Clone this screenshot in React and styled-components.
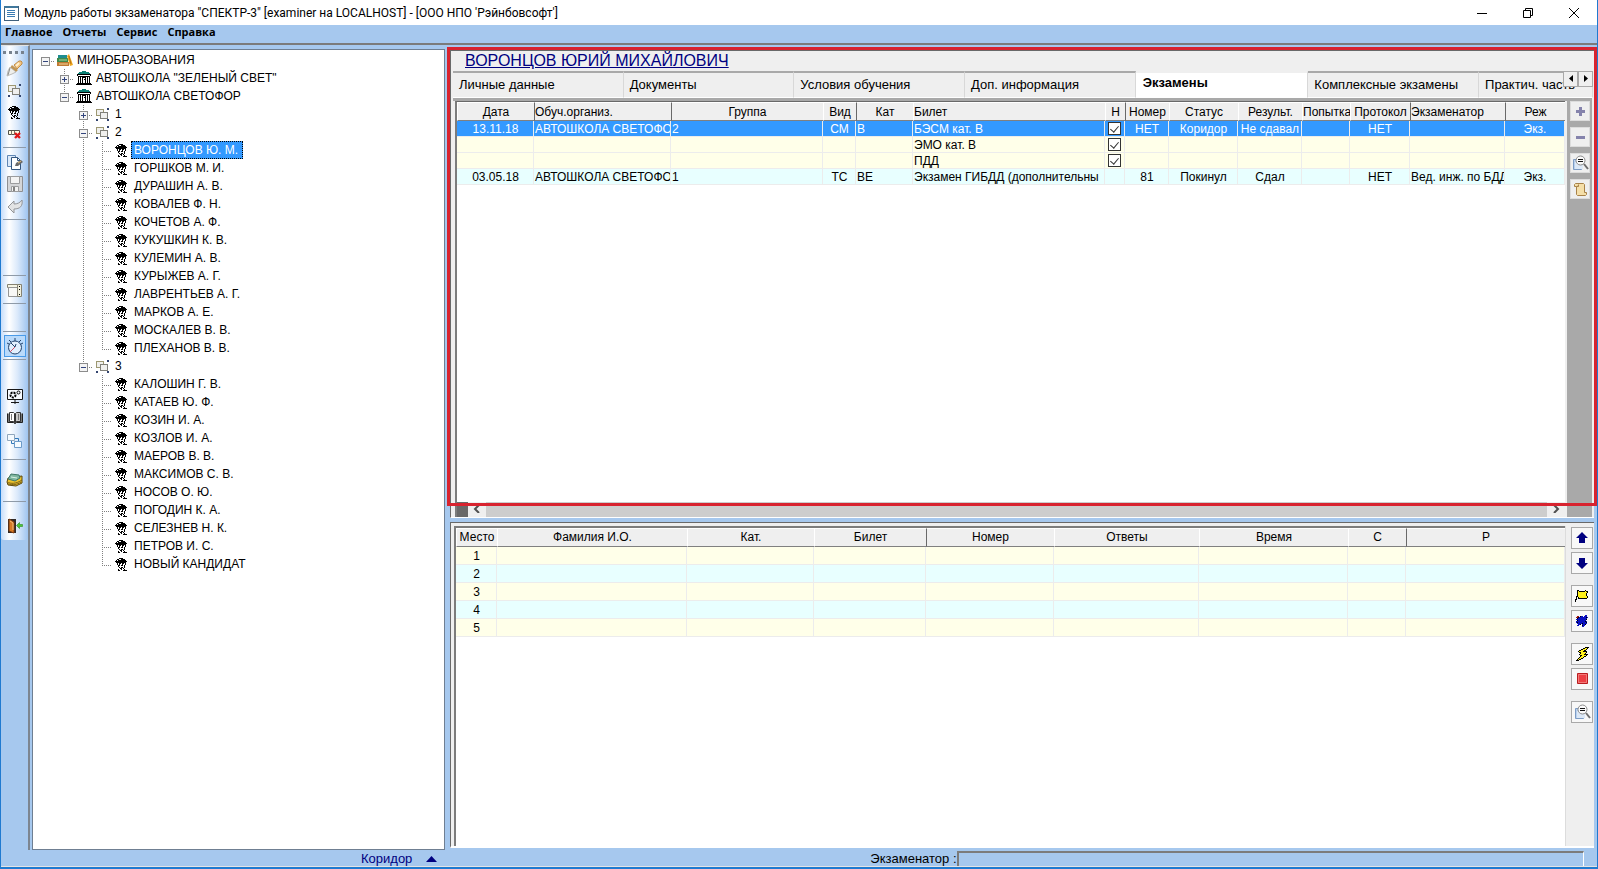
import React, { useState } from "react";
import styled, { createGlobalStyle, css } from "styled-components";

const PERSON = [
  "....####.....",
  "..##..####...",
  ".#.########..",
  "############.",
  ".##########..",
  "..#.##.##.#..",
  "..#.#..#..#..",
  "...##.##.#...",
  "...#.....#...",
  "....#.##.#...",
  ".....##.#....",
  "...#..#..#...",
  "...##...####.",
];

const BUILDING = [
  "......tttt......",
  "...tttttttttt...",
  "..tttttttttttt..",
  ".##############.",
  ".#wwwwwwwwwwww#.",
  "..############..",
  "..#w#w####w#w#..",
  "..#w#w#ww#w#w#..",
  "..#w#w#w##w#w#..",
  "..#w#w#ww#w#w#..",
  "..#w#w#ww#w#w#..",
  "..#w#w#ww#w#w#..",
  ".##############.",
  "################",
];

const GROUP = [
  "...........bb",
  "yyyyyyyy...bb",
  "yggggggy.....",
  "yggggggy.....",
  "yggg########.",
  "yggg#gggggg#.",
  "yggg#gggggg#.",
  "yyyy#gggggg#.",
  "....#gggggg#.",
  "....#gggggg#.",
  "....########.",
  "bb.........bb",
  "bb.........bb",
];

const FLAG = [
  "..##......#...",
  "..#y######y##.",
  "..#yyyyyyyyy#.",
  "..#yyyyyyyy#..",
  "..#yyyyyyyy#..",
  "..#yyyyyyyy#..",
  ".##yyyyyyyyy#.",
  ".#.#yyyyyyyy#.",
  ".#.#########..",
  "##............",
  "#.............",
  "#.............",
];

const SPLAT = [
  ".........bb.",
  ".rr.#bb.bbb.",
  "rr#bbbbbbb#b",
  ".#bbbbbbbbb.",
  "bbbbbbbbbb#.",
  ".#bbbbbbbb..",
  "bbbbbbbbb#b.",
  "b#bbbbbbbb#.",
  ".bbbbb#bbbb.",
  "..bb#.bbb#..",
  ".bb...#bb...",
  "......bb....",
];

const BOLT = [
  "..........####",
  "........##yy#.",
  "......##yyy#..",
  "....##yyy##...",
  "...#yyyy####..",
  "....##yyyyy#..",
  ".....#yyyy#...",
  "....#yyyy####.",
  ".....##yyyy#..",
  ".....#yyy##...",
  "....#yyy#.....",
  "...#yy##......",
  "..#y##........",
  ".###..........",
];

const inks = {
  "#": "#000000",
  t: "#0c8075",
  w: "#ffffff",
  y: "#fff01a",
  b: "#0a10c0",
  r: "#a01818",
};
const groupInks = { "#": "#80807a", y: "#9d9872", g: "#f0f0ee", b: "#33456f" };

function Pixels({ rows, colors = inks }) {
  const width = rows[0].length;
  return (
    <svg width={width} height={rows.length} shapeRendering="crispEdges" aria-hidden="true">
      {rows.map((row, y) =>
        row.split("").map((ch, x) =>
          ch === "." ? null : <rect key={x + "-" + y} x={x} y={y} width="1" height="1" fill={colors[ch]} />
        )
      )}
    </svg>
  );
}

const PersonIcon = () => <Pixels rows={PERSON} />;
const BuildingIcon = () => <Pixels rows={BUILDING} />;
const GroupIcon = () => <Pixels rows={GROUP} colors={groupInks} />;

const BooksIcon = () => (
  <svg width="16" height="13" viewBox="0 0 16 13">
    <path d="M1 1h9v3H1z" fill="#1f8d90" />
    <path d="M0 4h11v4H0z" fill="#3f8a4c" />
    <path d="M2 6h8" stroke="#a8d6a0" />
    <path d="M0 8h12v4H0z" fill="#c07a34" />
    <path d="M2 10h9" stroke="#f4d79a" />
    <path d="M10 2l2-2 4 11-3 1z" fill="#f0a820" />
    <path d="M12 2l2 8" stroke="#b87414" />
  </svg>
);

const WindowIcon = () => (
  <svg width="16" height="16" viewBox="0 0 16 16" shapeRendering="crispEdges">
    <path d="M1 1h14v14H1z" fill="#fff" stroke="#40607c" />
    <path d="M1 1h14v2H1z" fill="#40789c" />
    <path d="M4 5.500h8M4 7.500h8M4 9.500h8M4 11.500h8" stroke="#3a7cb4" />
  </svg>
);

const FlashlightIcon = () => (
  <svg width="17" height="17" viewBox="0 0 17 17">
    <path d="M8 5l5-4h2l1 1v2l-5 5z" fill="#f3c583" stroke="#c08c48" />
    <path d="M6 5l6 5-2 2-6-4z" fill="#c19552" />
    <path d="M4 7l6 5-4 2-5 2 1-5z" fill="#efefec" stroke="#a5a49e" strokeWidth="0.7" />
    <path d="M4 8l-2 7" stroke="#8d8d8a" />
    <path d="M10 6l3-3" stroke="#fff1cf" strokeWidth="2" />
  </svg>
);

const RemoveIcon = () => (
  <svg width="15" height="12" viewBox="0 0 15 12">
    <path d="M1.500 2.500h11v4h-11z" fill="#fffbe2" stroke="#53524a" />
    <path d="M4.500 3v4M7.500 3v4" stroke="#77756a" />
    <path d="M8 5l5 5M13 5l-5 5" stroke="#e01818" strokeWidth="2.4" />
  </svg>
);

const EditDocsIcon = () => (
  <svg width="18" height="17" viewBox="0 0 18 17">
    <path d="M1.500 1.500h8v11h-8z" fill="#dceafa" stroke="#5f86b5" />
    <path d="M5.500 3.500h6l3 3v9h-9z" fill="#fff" stroke="#35577f" />
    <path d="M11.500 3.500v3h3" fill="none" stroke="#35577f" />
    <path d="M9 12l1-3 5-3 2 2-5 4z" fill="#6a6a6a" />
    <path d="M12 9l3-2" stroke="#e4bb70" />
  </svg>
);

const SaveIcon = () => (
  <svg width="16" height="16" viewBox="0 0 16 16">
    <path d="M.5.5h15v15H.5z" fill="#d4d5d7" stroke="#8e8f92" />
    <path d="M3.500.5h9v7h-9z" fill="#f3f3f3" stroke="#9b9c9e" />
    <path d="M4.500 10.500h7v5h-7z" fill="#f3f3f3" stroke="#9b9c9e" />
    <path d="M7 11v4" stroke="#808080" strokeWidth="2" />
  </svg>
);

const UndoIcon = () => (
  <svg width="16" height="14" viewBox="0 0 16 14">
    <path d="M1 8l6-6v3c3 0 6-1 8-4 1 6-2 9-8 9v4z" fill="#e2e3e4" stroke="#929498" />
  </svg>
);

const CabinetIcon = () => (
  <svg width="15" height="15" viewBox="0 0 15 15">
    <path d="M.5 1.500h10v3H.5z" fill="#f6f5e6" stroke="#858272" />
    <path d="M1.500 4.500h9v9h-9z" fill="#f8f8f6" stroke="#959595" />
    <path d="M10.500 1.500h4v12h-4z" fill="#f1efdc" stroke="#858272" />
    <path d="M12.500 3v1M12.500 6v1M12.500 11v1" stroke="#000" />
  </svg>
);

const ClockIcon = () => (
  <svg width="18" height="17" viewBox="0 0 18 17">
    <circle cx="9" cy="9.500" r="6.500" fill="#e2f0fe" stroke="#24436b" />
    <path d="M9 0v3M3 2l2 2M15 2l-2 2M1 5l2 1M17 5l-2 1" stroke="#24436b" />
    <path d="M5 5l4 4 1-3" stroke="#24436b" fill="none" />
    <path d="M9 9l-5 5" stroke="#d2516b" />
  </svg>
);

const MonitorIcon = () => (
  <svg width="16" height="16" viewBox="0 0 16 16">
    <path d="M.5 1.500h15v10H.5z" fill="#f8fbff" stroke="#161616" />
    <circle cx="6" cy="7" r="2.500" fill="none" stroke="#000" strokeWidth="2" strokeDasharray="2 1" />
    <circle cx="11.500" cy="4.500" r="1.500" fill="none" stroke="#000" />
    <path d="M8 11v5M4 14.500h8" stroke="#161616" />
  </svg>
);

const BookIcon = () => (
  <svg width="16" height="14" viewBox="0 0 16 14">
    <path d="M.5 2.500v9h6l1 1h1l1-1h6v-9" fill="#777" stroke="#222" />
    <path d="M2.500 1.500h4l1 1v9l-1-1h-4z" fill="#fff" stroke="#333" />
    <path d="M13.500 1.500h-4l-1 1v9l1-1h4z" fill="#c8c8c8" stroke="#333" />
    <path d="M4.500 3v6M11.500 3v6" stroke="#777" />
  </svg>
);

const LinkIcon = () => (
  <svg width="15" height="15" viewBox="0 0 15 15">
    <path d="M.5 1.500h7v6h-7z" fill="#f4faff" stroke="#8fa6bd" />
    <path d="M7.500 8.500h7v6h-7z" fill="#f4faff" stroke="#6c9bc8" />
    <path d="M8 5.500h3.500V8M4.500 8v2.500H7" stroke="#2f78ba" fill="none" />
  </svg>
);

const MoneyIcon = () => (
  <svg width="17" height="14" viewBox="0 0 17 14">
    <path d="M1 9l1-4 14-2v7l-6 3-8-1z" fill="#eec32c" stroke="#5b480e" />
    <path d="M2 6l3-5 8 1 1 3-5 3z" fill="#7fb6a0" stroke="#3f7767" />
    <path d="M5 4l6 1" stroke="#d8f1e5" />
    <path d="M1 9c4 2 9 2 15-2M2 11c5 1 9 1 13-2" stroke="#7a6216" fill="none" />
  </svg>
);

const ExitIcon = () => (
  <svg width="16" height="16" viewBox="0 0 16 16">
    <path d="M1 1h8v14H1z" fill="#302a28" />
    <path d="M2 1l5 3v11l-5-2z" fill="#d77a25" stroke="#7a3a10" />
    <path d="M3 3l3 2v7" stroke="#f4bd7c" fill="none" />
    <path d="M9.500 7.500l3-3v2h3v2h-3v2z" fill="#4ec637" stroke="#2c8c20" strokeWidth="0.6" />
  </svg>
);

const PreviewIcon = () => (
  <svg width="17" height="16" viewBox="0 0 17 16">
    <path d="M1.500 4.500h8v10h-8z" fill="#b9d1ef" stroke="#7d9cc4" />
    <path d="M3 7h8v7H3z" fill="#dce8f6" />
    <circle cx="8.500" cy="5.500" r="4.500" fill="#fafafa" stroke="#8a8a8a" />
    <path d="M6 4.500h5M6 6.500h5" stroke="#111" />
    <path d="M12 9l4 5" stroke="#6e6e6e" strokeWidth="2" />
  </svg>
);

const ScrollIcon = () => (
  <svg width="15" height="15" viewBox="0 0 15 15">
    <path d="M1.500 2.500l1-1h8l1 1v8h2v2l-1 1h-8l-1-1v-8h-2z" fill="#f5dfa9" stroke="#a88248" />
    <path d="M3.500 4.500h2v-2" fill="#d6b372" stroke="#a88248" />
  </svg>
);

const SignIcon = ({ plus }) => (
  <svg width="12" height="12" viewBox="0 0 12 12" shapeRendering="crispEdges">
    <path d={plus ? "M2 5h9v3H2zM5 2h3v9H5z" : "M2 5h9v3H2z"} fill="#8583ac" />
  </svg>
);

const BigArrow = ({ down }) => (
  <svg width="12" height="12" viewBox="0 0 12 12">
    <path d={down ? "M3 1h6v5h3l-6 6-6-6h3z" : "M3 11h6V6h3L6 0 0 6h3z"} fill="#000080" />
  </svg>
);

const StopIcon = () => (
  <svg width="13" height="13" viewBox="0 0 13 13">
    <path d="M1.500 1.500h10v10h-10z" fill="#f05450" stroke="#b81d20" />
    <path d="M2.500 2.500h8v8h-8z" fill="#ec4044" stroke="#f47a78" />
  </svg>
);

const toolbarItems = [
  { icon: <FlashlightIcon />, label: "Поиск" },
  { icon: <GroupIcon />, label: "Группа" },
  { icon: <PersonIcon />, label: "Кандидат" },
  { icon: <RemoveIcon />, label: "Удалить" },
  { line: true },
  { icon: <EditDocsIcon />, label: "Изменить" },
  { icon: <SaveIcon />, label: "Сохранить" },
  { icon: <UndoIcon />, label: "Отменить" },
  { line: true },
  { space: 50 },
  { line: true },
  { icon: <CabinetIcon />, label: "Архив" },
  { line: true },
  { space: 22 },
  { line: true },
  { icon: <ClockIcon />, label: "Время", active: true },
  { line: true },
  { space: 22 },
  { icon: <MonitorIcon />, label: "Настройка" },
  { icon: <BookIcon />, label: "Справочник" },
  { icon: <LinkIcon />, label: "Сеть" },
  { space: 6 },
  { line: true },
  { space: 6 },
  { icon: <MoneyIcon />, label: "Оплата" },
  { space: 8 },
  { line: true },
  { space: 10 },
  { icon: <ExitIcon />, label: "Выход" },
];

const groupTwo = [
  "ВОРОНЦОВ Ю. М.",
  "ГОРШКОВ М. И.",
  "ДУРАШИН А. В.",
  "КОВАЛЕВ Ф. Н.",
  "КОЧЕТОВ А. Ф.",
  "КУКУШКИН К. В.",
  "КУЛЕМИН А. В.",
  "КУРЫЖЕВ А. Г.",
  "ЛАВРЕНТЬЕВ А. Г.",
  "МАРКОВ А. Е.",
  "МОСКАЛЕВ В. В.",
  "ПЛЕХАНОВ В. В.",
];

const groupThree = [
  "КАЛОШИН Г. В.",
  "КАТАЕВ Ю. Ф.",
  "КОЗИН И. А.",
  "КОЗЛОВ И. А.",
  "МАЕРОВ В. В.",
  "МАКСИМОВ С. В.",
  "НОСОВ О. Ю.",
  "ПОГОДИН К. А.",
  "СЕЛЕЗНЕВ Н. К.",
  "ПЕТРОВ И. С.",
  "НОВЫЙ КАНДИДАТ",
];

const people = (names, passLine) =>
  names.map((name, i) => ({
    name,
    icon: <PersonIcon />,
    guides: ["", "", passLine ? "full" : "", i === names.length - 1 ? "end" : "tee"],
  }));

// guides: one entry for each 19px column on the left of the icon
const treeRows = [
  { name: "МИНОБРАЗОВАНИЯ", icon: <BooksIcon />, guides: ["root"], box: "minus" },
  { name: 'АВТОШКОЛА "ЗЕЛЕНЫЙ СВЕТ"', icon: <BuildingIcon />, guides: ["", "tee"], box: "plus" },
  { name: "АВТОШКОЛА СВЕТОФОР", icon: <BuildingIcon />, guides: ["", "end"], box: "minus" },
  { name: "1", icon: <GroupIcon />, guides: ["", "", "tee"], box: "plus" },
  { name: "2", icon: <GroupIcon />, guides: ["", "", "tee"], box: "minus" },
  ...people(groupTwo, true),
  { name: "3", icon: <GroupIcon />, guides: ["", "", "end"], box: "minus" },
  ...people(groupThree, false),
];

const tabs = [
  "Личные данные",
  "Документы",
  "Условия обучения",
  "Доп. информация",
  "Экзамены",
  "Комплексные экзамены",
  "Практич. часть",
];

const examColumns = [
  { title: "Дата", width: 77, align: "center" },
  { title: "Обуч.организ.", width: 137, align: "left", dark: true },
  { title: "Группа", width: 152, align: "left", titleAlign: "center", dark: true },
  { title: "Вид", width: 33, align: "center" },
  { title: "Кат", width: 57, align: "left", titleAlign: "center", dark: true },
  { title: "Билет", align: "left" },
  { title: "Н", width: 20, align: "center" },
  { title: "Номер", width: 44, align: "center", dark: true },
  { title: "Статус", width: 69, align: "center" },
  { title: "Результ.", width: 64, align: "center" },
  { title: "Попытка", width: 48, align: "left" },
  { title: "Протокол", width: 60, align: "center" },
  { title: "Экзаменатор", width: 95, align: "left", dark: true },
  { title: "Реж", width: 60, align: "center", dark: true },
];

const CHECK = "check";
const exams = [
  {
    tone: "selected",
    cells: ["13.11.18", "АВТОШКОЛА СВЕТОФО", "2", "СМ", "В", "БЭСМ кат. В", CHECK, "НЕТ", "Коридор", "Не сдавал", "", "НЕТ", "", "Экз."],
  },
  { tone: "yellow", cells: ["", "", "", "", "", "ЭМО кат. В", CHECK, "", "", "", "", "", "", ""] },
  { tone: "yellow", cells: ["", "", "", "", "", "ПДД", CHECK, "", "", "", "", "", "", ""] },
  {
    tone: "cyan",
    cells: ["03.05.18", "АВТОШКОЛА СВЕТОФО", "1", "ТС", "ВЕ", "Экзамен ГИБДД (дополнительны", "", "81", "Покинул", "Сдал", "", "НЕТ", "Вед. инж. по БДД", "Экз."],
  },
];

const seatColumns = [
  { title: "Место", width: 41 },
  { title: "Фамилия И.О.", width: 190 },
  { title: "Кат.", width: 127 },
  { title: "Билет", width: 112 },
  { title: "Номер", width: 128, dark: true },
  { title: "Ответы", width: 145 },
  { title: "Время", width: 149 },
  { title: "С", width: 58 },
  { title: "Р", dark: true },
];

function App() {
  const [selected, setSelected] = useState("ВОРОНЦОВ Ю. М.");
  const [activeTab, setActiveTab] = useState("Экзамены");

  const renderTree = () => {
    return treeRows.map((row) => (
      <TreeRow key={row.name}>
        {row.guides.map((kind, i) => (
          <Guide key={i} $kind={kind}>
            {row.box && i === row.guides.length - 1 && (
              <Expander $plus={row.box === "plus"} aria-label={"Развернуть " + row.name} />
            )}
          </Guide>
        ))}
        <TreeIcon>{row.icon}</TreeIcon>
        <TreeLabel $selected={row.name === selected} onClick={() => setSelected(row.name)}>
          {row.name}
        </TreeLabel>
      </TreeRow>
    ));
  };

  const renderCols = (columns) => (
    <colgroup>
      {columns.map((col) => (
        <Col key={col.title} $width={col.width} />
      ))}
    </colgroup>
  );

  const renderHead = (columns) => (
    <thead>
      <tr>
        {columns.map((col) => (
          <HeadCell key={col.title} $align={col.titleAlign || col.align} $dark={col.dark}>
            {col.title}
          </HeadCell>
        ))}
      </tr>
    </thead>
  );

  return (
    <Window>
      <GlobalStyle />
      <TitleBar>
        <WindowIcon />
        <WindowTitle>
          Модуль работы экзаменатора "СПЕКТР-3" [examiner на LOCALHOST] - [ООО НПО 'Рэйнбовсофт']
        </WindowTitle>
        <WindowButton aria-label="Свернуть">
          <svg width="12" height="12"><path d="M1 6.500h10" stroke="#000" /></svg>
        </WindowButton>
        <WindowButton aria-label="Восстановить">
          <svg width="12" height="12"><path d="M1.500 3.500h7v7h-7zM3.500 3.500v-2h7v7h-2" fill="none" stroke="#000" /></svg>
        </WindowButton>
        <WindowButton aria-label="Закрыть">
          <svg width="12" height="12"><path d="M1 1l10 10M11 1L1 11" stroke="#000" /></svg>
        </WindowButton>
      </TitleBar>
      <MenuBar>
        <MenuItem>Главное</MenuItem>
        <MenuItem>Отчеты</MenuItem>
        <MenuItem>Сервис</MenuItem>
        <MenuItem>Справка</MenuItem>
      </MenuBar>
      <Body>
        <ToolColumn>
          <Toolbar>
            <Grip />
            {toolbarItems.map((item, i) => {
              if (item.line) return <ToolLine key={i} />;
              if (item.space) return <ToolSpace key={i} $size={item.space} />;
              return (
                <ToolButton key={i} $active={item.active} aria-label={item.label}>
                  {item.icon}
                </ToolButton>
              );
            })}
          </Toolbar>
        </ToolColumn>
        <TreePanel>{renderTree()}</TreePanel>
        <RightSide>
          <ExamPanel>
            <PersonHeading>ВОРОНЦОВ ЮРИЙ МИХАЙЛОВИЧ</PersonHeading>
            <TabBar role="tablist">
              {tabs.map((tab) => (
                <Tab
                  key={tab}
                  role="tab"
                  aria-selected={tab === activeTab}
                  $active={tab === activeTab}
                  onClick={() => setActiveTab(tab)}
                >
                  {tab}
                </Tab>
              ))}
              <TabScroll>
                <TabArrow aria-label="Назад">
                  <svg width="4" height="8"><path d="M4 0v7L0 3.500z" /></svg>
                </TabArrow>
                <TabArrow aria-label="Вперед">
                  <svg width="4" height="8"><path d="M0 0v7l4-3.500z" /></svg>
                </TabArrow>
              </TabScroll>
            </TabBar>
            <ExamContent>
              <ExamGrid>
                <DataTable $row={16}>
                  {renderCols(examColumns)}
                  {renderHead(examColumns)}
                  <tbody>
                    {exams.map((exam, i) => (
                      <DataRow key={i} $tone={exam.tone}>
                        {exam.cells.map((cell, j) =>
                          cell === CHECK ? (
                            <CheckCell key={j}>
                              <Check type="checkbox" defaultChecked aria-label={"Назначен " + exam.cells[5]} />
                            </CheckCell>
                          ) : (
                            <Cell key={j} $align={examColumns[j].align}>
                              {cell}
                            </Cell>
                          )
                        )}
                      </DataRow>
                    ))}
                  </tbody>
                </DataTable>
                <ScrollBar>
                  <ScrollCorner />
                  <ScrollButton aria-label="Влево">
                    <svg width="8" height="8"><path d="M6 0L2 4l4 4" fill="none" stroke="#505050" strokeWidth="2" /></svg>
                  </ScrollButton>
                  <ScrollThumb />
                  <ScrollButton aria-label="Вправо">
                    <svg width="8" height="8"><path d="M2 0l4 4-4 4" fill="none" stroke="#505050" strokeWidth="2" /></svg>
                  </ScrollButton>
                </ScrollBar>
              </ExamGrid>
              <ExamActions>
                <ExamAction aria-label="Добавить"><SignIcon plus /></ExamAction>
                <ExamAction aria-label="Убрать"><SignIcon /></ExamAction>
                <ExamAction aria-label="Просмотр"><PreviewIcon /></ExamAction>
                <ExamAction aria-label="Протокол"><ScrollIcon /></ExamAction>
              </ExamActions>
            </ExamContent>
            <RedFrame />
          </ExamPanel>
          <SeatPanel>
            <SeatGrid>
              <DataTable $row={18}>
                {renderCols(seatColumns)}
                {renderHead(seatColumns)}
                <tbody>
                  {[1, 2, 3, 4, 5].map((seat) => (
                    <DataRow key={seat} $tone={seat % 2 ? "yellow" : "cyan"}>
                      {seatColumns.map((col, j) => (
                        <Cell key={j}>{j === 0 ? seat : ""}</Cell>
                      ))}
                    </DataRow>
                  ))}
                </tbody>
              </DataTable>
            </SeatGrid>
            <SeatActions>
              <SeatGroup>
                <SeatAction aria-label="Вверх"><BigArrow /></SeatAction>
                <SeatAction aria-label="Вниз"><BigArrow down /></SeatAction>
              </SeatGroup>
              <SeatGroup>
                <SeatAction aria-label="Старт"><Pixels rows={FLAG} /></SeatAction>
                <SeatAction aria-label="Сброс"><Pixels rows={SPLAT} /></SeatAction>
              </SeatGroup>
              <SeatGroup>
                <SeatAction aria-label="Быстрый старт"><Pixels rows={BOLT} /></SeatAction>
                <SeatAction aria-label="Стоп"><StopIcon /></SeatAction>
              </SeatGroup>
              <SeatGroup>
                <SeatAction aria-label="Просмотр"><PreviewIcon /></SeatAction>
              </SeatGroup>
            </SeatActions>
          </SeatPanel>
        </RightSide>
      </Body>
      <StatusBar>
        <Corridor>
          Коридор
          <svg width="11" height="6"><path d="M0 6l5.500-6L11 6z" fill="#000080" /></svg>
        </Corridor>
        <ExaminerLabel htmlFor="examiner">Экзаменатор :</ExaminerLabel>
        <ExaminerField id="examiner" type="text" />
      </StatusBar>
    </Window>
  );
}

export default App;

const GlobalStyle = createGlobalStyle`
  * {
    box-sizing: border-box;
  }
  body {
    margin: 0;
    font-family: "Liberation Sans", Arial, sans-serif;
    font-size: 12px;
    color: #000;
  }
  button, input {
    font: inherit;
    color: inherit;
    padding: 0;
    margin: 0;
    border: none;
    border-radius: 0;
    background: none;
  }
  svg {
    display: block;
    flex-shrink: 0;
  }
`;

const Window = styled.div`
  display: flex;
  flex-direction: column;
  min-height: 100vh;
  border: 1px solid #1f7ad0;
  border-top: none;
  border-bottom-width: 2px;
  background: #a6c8ee;
`;
const TitleBar = styled.header`
  display: flex;
  align-items: center;
  height: 25px;
  padding-left: 2px;
  background: #fff;
`;
const WindowTitle = styled.h1`
  flex: 1;
  margin: 0 0 0 5px;
  font-family: Roboto, "Open Sans", sans-serif;
  font-size: 12px;
  font-weight: normal;
`;
const WindowButton = styled.button`
  display: flex;
  align-items: center;
  justify-content: center;
  width: 46px;
  height: 24px;
`;
const MenuBar = styled.nav`
  display: flex;
  gap: 10px;
  height: 20px;
  padding: 0 4px 4px;
  border-bottom: 2px solid #7b7b7b;
`;
const MenuItem = styled.button`
  font-family: "Open Sans", "Noto Sans", sans-serif;
  font-size: 11px;
  font-weight: bold;
  line-height: 14px;
`;
const Body = styled.main`
  display: flex;
  flex: 1;
`;
const ToolColumn = styled.aside`
  width: 29px;
  flex-shrink: 0;
  border-top: 1px solid #e4e4e4;
  border-right: 2px solid #7c8590;
`;
const Toolbar = styled.div`
  display: flex;
  flex-direction: column;
  align-items: center;
  padding: 1px 0 3px;
  border-radius: 0 0 3px 3px;
  background: linear-gradient(to right, #c8defa, #ffffff 30%, #dceafb 60%, #9fc4ef);
`;
const Grip = styled.div`
  width: 23px;
  height: 3px;
  margin: 4px 0 3px;
  background: repeating-linear-gradient(to right, #77828f 0 3px, transparent 3px 6px);
`;
const ToolButton = styled.button`
  display: flex;
  align-items: center;
  justify-content: center;
  width: 22px;
  height: 22px;
  ${(props) =>
    props.$active &&
    css`
      border: 1px solid #4a9be8;
      background: #b9dafb;
    `}
`;
const ToolLine = styled.hr`
  width: 23px;
  height: 1px;
  margin: 2px 0 3px;
  border: none;
  background: #8e9aa8;
`;
const ToolSpace = styled.div`
  height: ${(props) => props.$size}px;
`;
const TreePanel = styled.ul`
  width: 413px;
  flex-shrink: 0;
  margin: 4px 0 0 2px;
  padding: 1px 3px;
  border: 1px solid #6f7f92;
  background: #fff;
  list-style: none;
`;
const TreeRow = styled.li`
  display: flex;
  align-items: center;
  height: 18px;
`;
const dots = "#808080 0 1px, transparent 1px 2px";
const Guide = styled.span`
  display: flex;
  align-items: center;
  justify-content: center;
  width: 19px;
  height: 18px;
  ${(props) =>
    props.$kind &&
    css`
      background-repeat: no-repeat;
      background-image: repeating-linear-gradient(to bottom, ${dots}),
        repeating-linear-gradient(to right, ${dots});
      background-size: 1px ${{ root: 0, full: 18, tee: 18, end: 10 }[props.$kind]}px,
        ${props.$kind === "full" ? 0 : 10}px 1px;
      background-position: 9px 0, 9px 10px;
    `}
`;
const Expander = styled.button`
  width: 9px;
  height: 9px;
  margin-top: 3px;
  border: 1px solid #8c8c8c;
  background: linear-gradient(#33457d, #33457d) center / 5px 1px no-repeat,
    linear-gradient(#33457d, #33457d) center / 1px ${(props) => (props.$plus ? 5 : 0)}px no-repeat,
    #f4f4f4;
`;
const TreeIcon = styled.span`
  display: flex;
  justify-content: center;
  width: 19px;
`;
const TreeLabel = styled.button`
  height: 18px;
  padding: 0 4px 0 2px;
  border: 1px dotted transparent;
  ${(props) =>
    props.$selected &&
    css`
      border-color: #000;
      background: #3399ff;
      color: #fff;
    `}
`;
const RightSide = styled.section`
  display: flex;
  flex: 1;
  flex-direction: column;
  gap: 4px;
  min-width: 0;
  padding: 5px 3px 2px 5px;
`;
const ExamPanel = styled.div`
  position: relative;
  display: flex;
  flex-direction: column;
  flex: 465;
  padding-left: 2px;
  border-top: 1px solid #696969;
  border-left: 1px solid #696969;
  border-bottom: 1px solid #fff;
  background: #efefef;
`;
const PersonHeading = styled.h2`
  height: 20px;
  margin: 0;
  padding-left: 12px;
  overflow: hidden;
  font-size: 16px;
  line-height: 20px;
  font-weight: normal;
  color: #000080;
  text-decoration: underline;
`;
const TabBar = styled.div`
  position: relative;
  display: flex;
  height: 27px;
  margin-right: 1px;
  overflow: hidden;
`;
const Tab = styled.button`
  flex: 1;
  padding: 0 6px 2px;
  border-top: 2px solid #a9a9a9;
  border-right: 1px solid #d8d8d8;
  border-bottom: 1px solid #fff;
  font-size: 13px;
  text-align: left;
  white-space: nowrap;
  &:nth-child(7) {
    flex: 0 0 114px;
  }
  ${(props) =>
    props.$active &&
    css`
      padding: 0 7px 6px;
      border-top-color: #efefef;
      background: #fff;
      font-weight: bold;
    `}
`;
const TabScroll = styled.div`
  position: absolute;
  top: 0;
  right: 0;
  display: flex;
`;
const TabArrow = styled.button`
  display: flex;
  align-items: center;
  justify-content: center;
  width: 15px;
  height: 16px;
  border: 1px solid #a9a9a9;
  background: #efefef;
`;
const ExamContent = styled.div`
  display: flex;
  flex: 1;
  margin-right: 2px;
  padding-left: 2px;
  border-top: 3px solid #a9a9a9;
`;
const ExamGrid = styled.div`
  display: flex;
  flex: 1;
  flex-direction: column;
  min-width: 0;
  border-top: 1px solid #696969;
  border-left: 2px solid #7c7c7c;
  background: #fff;
`;
const DataTable = styled.table`
  width: 100%;
  table-layout: fixed;
  border-collapse: separate;
  border-spacing: 0;
  td {
    height: ${(props) => props.$row}px;
    line-height: ${(props) => props.$row - 3}px;
  }
`;
const Col = styled.col`
  width: ${(props) => (props.$width ? props.$width + "px" : "auto")};
`;
const HeadCell = styled.th`
  height: 19px;
  padding: 0;
  overflow: hidden;
  border-top: 1px solid #fff;
  border-left: 1px solid ${(props) => (props.$dark ? "#696969" : "#fff")};
  border-bottom: 1px solid #808080;
  background: #efefef;
  font-weight: normal;
  line-height: 16px;
  text-align: ${(props) => props.$align || "center"};
  white-space: nowrap;
`;
const tones = { selected: "#3399ff", yellow: "#ffffe9", cyan: "#e8ffff" };
const DataRow = styled.tr`
  background: ${(props) => tones[props.$tone]};
  color: ${(props) => (props.$tone === "selected" ? "#fff" : "#000")};
`;
const Cell = styled.td`
  padding: 2px 0 0 1px;
  overflow: hidden;
  border-right: 1px solid #ececec;
  border-bottom: 1px solid #ececec;
  text-align: ${(props) => props.$align || "center"};
  white-space: nowrap;
`;
const CheckCell = styled(Cell)`
  padding: 0;
`;
const Check = styled.input`
  position: relative;
  display: block;
  width: 13px;
  height: 13px;
  margin: 0 auto;
  appearance: none;
  border: 1px solid #333;
  background: #fff;
  &:checked::after {
    content: "";
    position: absolute;
    left: 3px;
    top: 1px;
    width: 4px;
    height: 7px;
    border: solid #333;
    border-width: 0 1px 1px 0;
    transform: rotate(40deg);
  }
`;
const ScrollBar = styled.div`
  display: flex;
  height: 15px;
  margin-top: auto;
  background: #efefef;
`;
const ScrollCorner = styled.span`
  width: 11px;
  background: #696969;
`;
const ScrollButton = styled.button`
  display: flex;
  align-items: center;
  justify-content: center;
  width: 18px;
`;
const ScrollThumb = styled.div`
  flex: 1;
  background: #cdcdcd;
`;
const ExamActions = styled.div`
  display: flex;
  flex-direction: column;
  gap: 6px;
  width: 27px;
  padding: 0 2px 0 3px;
  border-left: 2px solid #efefef;
  background: #a9a9a9;
`;
const ExamAction = styled.button`
  display: flex;
  align-items: center;
  justify-content: center;
  width: 20px;
  height: 20px;
  border: 1px solid #dcdcdc;
  background: #efefef;
`;
const RedFrame = styled.div`
  position: absolute;
  top: -4px;
  right: -3px;
  bottom: 11px;
  left: -4px;
  border: 3px solid #d8232f;
  pointer-events: none;
`;
const SeatPanel = styled.div`
  display: flex;
  flex: 320;
  padding: 3px 0 0 3px;
  border-top: 1px solid #696969;
  border-left: 1px solid #696969;
  border-bottom: 2px solid #fff;
  background: #efefef;
`;
const SeatGrid = styled.div`
  flex: 1;
  min-width: 0;
  border-top: 2px solid #7c7c7c;
  border-left: 2px solid #7c7c7c;
  background: #fff;
`;
const SeatActions = styled.div`
  display: flex;
  flex-direction: column;
  gap: 11px;
  width: 29px;
  padding: 1px 0 0 5px;
  border-left: 1px solid #dcdcdc;
`;
const SeatGroup = styled.div`
  display: flex;
  flex-direction: column;
  gap: 3px;
`;
const SeatAction = styled.button`
  display: flex;
  align-items: center;
  justify-content: center;
  width: 22px;
  height: 22px;
  border: 1px solid #a9a9a9;
  background: #f8f8f8;
`;
const StatusBar = styled.footer`
  display: flex;
  align-items: center;
  height: 17px;
  padding: 1px 13px 0 0;
  border-bottom: 1px solid #e4e4e4;
  font-size: 13px;
`;
const Corridor = styled.button`
  display: flex;
  align-items: center;
  gap: 14px;
  margin-left: 360px;
  color: #000080;
`;
const ExaminerLabel = styled.label`
  margin-left: 433px;
`;
const ExaminerField = styled.input`
  flex: 1;
  height: 15px;
  border-top: 2px solid #7c7c7c;
  border-left: 2px solid #7c7c7c;
  border-right: 1px solid #fff;
  outline: none;
`;
